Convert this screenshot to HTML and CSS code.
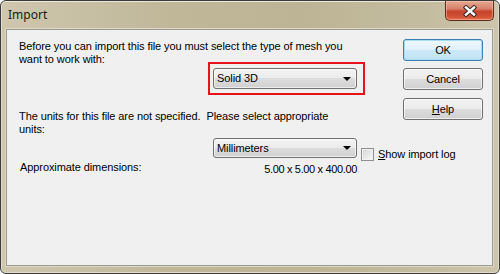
FILE: index.html
```html
<!DOCTYPE html>
<html>
<head>
<meta charset="utf-8">
<title>Import</title>
<link rel="stylesheet" href="styles.css">
</head>
<body>
<div class="window">
  <div class="titlebar">
    <span class="title">Import</span>
    <div class="close">
      <svg width="14" height="12" viewBox="0 0 14 12">
        <path d="M3 2.5 L11 9.5 M11 2.5 L3 9.5" stroke="#3a2a26" stroke-width="4.4" stroke-linecap="square" fill="none"/>
        <path d="M3 2.5 L11 9.5 M11 2.5 L3 9.5" stroke="#ffffff" stroke-width="2.4" stroke-linecap="square" fill="none"/>
      </svg>
    </div>
  </div>
  <div class="client">
    <div class="main">
      <p class="msg">Before you can import this file you must select the type of mesh you<br>want to work with:</p>
      <div class="combo highlight"><span>Solid 3D</span><i class="arrow"></i></div>
      <p class="msg units">The units for this file are not specified.&nbsp; Please select appropriate<br>units:</p>
      <div class="units-row">
        <div class="combo mm"><span>Millimeters</span><i class="arrow"></i></div>
        <label class="check"><span class="box"></span><span><u>S</u>how import log</span></label>
      </div>
      <div class="dims"><span>Approximate dimensions:</span><span class="val">5.00 x 5.00 x 400.00</span></div>
    </div>
    <div class="buttons">
      <div class="btn default">OK</div>
      <div class="btn">Cancel</div>
      <div class="btn help"><u>H</u>elp</div>
    </div>
  </div>
</div>
</body>
</html>
```

FILE: styles.css
```css
html, body {
  margin: 0;
  padding: 0;
}
body {
  width: 500px;
  height: 274px;
  background: #ffffff;
  font-family: "Liberation Sans", Arial, sans-serif;
  font-size: 11px;
  line-height: 13px;
  letter-spacing: -0.09px;
  color: #000;
}
.window {
  box-sizing: border-box;
  width: 500px;
  height: 274px;
  border: 1px solid #3b3b3b;
  border-radius: 6px;
  background: linear-gradient(90deg, #cec7ae 0%, #c0b799 35%, #bdb495 60%, #c4bc9f 85%, #ccc5ab 100%);
  box-shadow: inset 0 1px 0 #ebe7dc, inset 1px 0 0 #e2ddcc, inset -1px 0 0 #e2ddcc, inset 0 -1px 0 #e2ddcc;
  display: flex;
  flex-direction: column;
}
.titlebar {
  height: 28px;
  flex: none;
  display: flex;
  justify-content: space-between;
  align-items: flex-start;
}
.title {
  font-family: "Noto Sans", "Open Sans", sans-serif;
  font-size: 12px;
  line-height: 16px;
  letter-spacing: 0;
  margin: 6px 0 0 7px;
  color: #1b1b1b;
}
.close {
  box-sizing: border-box;
  width: 49px;
  height: 20px;
  margin-right: 5px;
  border: 1px solid #5e2a1c;
  border-top: none;
  border-radius: 0 0 5px 5px;
  background: linear-gradient(#e5a894 0%, #d8826a 40%, #c5442b 55%, #cf4f34 80%, #e0704c 100%);
  box-shadow: inset 0 0 0 1px rgba(255, 210, 190, 0.45);
  display: flex;
  align-items: center;
  justify-content: center;
}
.close svg {
  display: block;
}
.client {
  flex: none;
  box-sizing: border-box;
  height: 237px;
  margin: 0 6px 0 5px;
  border: 1px solid #9a9a92;
  box-shadow: 0 0 0 1px #ddd8c6;
  background: #f0f0f0;
  display: flex;
}
.main {
  flex: 1;
  min-width: 0;
  padding: 10px 0 0 12px;
}
.msg {
  margin: 0;
  white-space: nowrap;
}
.combo {
  flex: none;
  box-sizing: border-box;
  width: 144px;
  height: 21px;
  margin: 2px 0 0 194px;
  padding: 0 5px 0 3px;
  border: 1px solid #707070;
  border-radius: 3px;
  background: linear-gradient(#f3f3f3 0%, #ebebeb 50%, #dddddd 50%, #d0d0d0 100%);
  box-shadow: inset 0 0 0 1px rgba(255, 255, 255, 0.6);
  display: flex;
  align-items: center;
  justify-content: space-between;
  position: relative;
}
.highlight::after {
  content: "";
  position: absolute;
  left: -6px;
  top: -7px;
  right: -9px;
  bottom: -7px;
  border: 2px solid #e8121b;
}
.arrow {
  width: 0;
  height: 0;
  border-left: 4px solid transparent;
  border-right: 4px solid transparent;
  border-top: 4px solid #000;
}
.units {
  margin-top: 21px;
}
.units-row {
  display: flex;
  align-items: flex-start;
  margin-top: 2px;
}
.units-row .combo {
  margin-top: 0;
  height: 20px;
}
.check {
  flex: none;
  white-space: nowrap;
  display: flex;
  align-items: center;
  gap: 4px;
  height: 13px;
  margin: 10px 0 0 4px;
}
.box {
  box-sizing: border-box;
  width: 13px;
  height: 13px;
  border: 1px solid #8e8f8f;
  background: linear-gradient(135deg, #d6d6d6, #f8f8f8);
  box-shadow: inset 0 0 0 1px #f2f2f2;
}
.dims {
  display: flex;
  justify-content: space-between;
  align-items: flex-start;
  width: 337px;
  padding-left: 1px;
}
.val {
  padding-top: 2px;
  letter-spacing: -0.35px;
}
.buttons {
  flex: none;
  width: 80px;
  margin: 9px 9px 0 0;
  display: flex;
  flex-direction: column;
  gap: 7px;
}
.btn {
  box-sizing: border-box;
  height: 22px;
  border: 1px solid #707070;
  border-radius: 3px;
  background: linear-gradient(#f3f3f3 0%, #ebebeb 50%, #dddddd 50%, #d0d0d0 100%);
  box-shadow: inset 0 0 0 1px rgba(255, 255, 255, 0.65);
  display: flex;
  align-items: center;
  justify-content: center;
}
.btn.default {
  border-color: #3c7fb1;
  background: linear-gradient(#eef8fd 0%, #dff1fb 50%, #cde9f8 50%, #c0e2f5 100%);
  box-shadow: inset 0 0 0 1px #a8dcf5;
}
.btn.help {
  margin-top: 1px;
}
```
